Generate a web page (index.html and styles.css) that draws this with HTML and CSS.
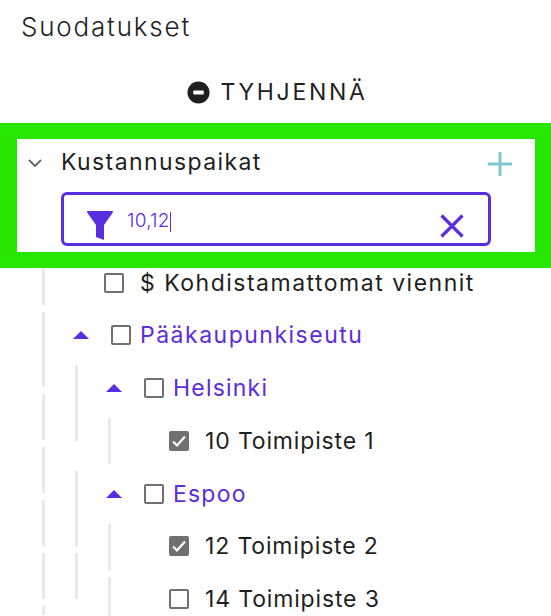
FILE: index.html
```html
<!DOCTYPE html>
<html lang="en">
<head>
    <meta charset="UTF-8">
    <meta name="viewport" content="width=device-width, initial-scale=1.0">
    <title>Suodatukset</title>
    <link rel="stylesheet" href="styles.css">
</head>
<body>
    <h1 class="title">Suodatukset</h1>

    <button class="clear-btn">
        <svg class="clear-icon" viewBox="0 0 24 24"><circle cx="12" cy="12" r="11.5" fill="#1f1f1f"/><rect x="6.5" y="10" width="11" height="4" rx="1" fill="#fff"/></svg>
        <span>TYHJENNÄ</span>
    </button>

    <section class="filter-box">
        <div class="filter-head">
            <svg class="chevron" viewBox="0 0 14 8"><path d="M1 1l6 6 6-6" fill="none" stroke="#666" stroke-width="1.8"/></svg>
            <span class="filter-name">Kustannuspaikat</span>
            <svg class="plus" viewBox="0 0 24 24"><path d="M12 0v24M0 12h24" fill="none" stroke="#7cc9cf" stroke-width="3"/></svg>
        </div>
        <div class="filter-input">
            <svg class="funnel" viewBox="0 0 26 29"><path d="M1 0h24c1 0 1.300 1 .7 1.700L17 14v15l-8-3V14L.3 1.700C-.3 1 0 0 1 0z" fill="#5b2de0"/></svg>
            <span class="filter-value">10,12</span><span class="caret"></span>
            <svg class="clear-x" viewBox="0 0 24 24"><path d="M1.500 1.500l21 21M22.500 1.500l-21 21" fill="none" stroke="#5b2de0" stroke-width="3.200"/></svg>
        </div>
    </section>

    <div class="tree">
        <div class="guide guide-1">
            <span class="dash dash-first"></span>
            <span class="dash dash-long"></span>
            <span class="dash"></span>
            <span class="dash"></span>
            <span class="dash"></span>
            <span class="dash"></span>
            <span class="dash dash-end"></span>
        </div>
        <div class="guide guide-2">
            <span class="dash dash-tall"></span>
            <span class="dash dash-tall"></span>
            <span class="dash"></span>
        </div>
        <div class="guide guide-3">
            <span class="dash"></span>
            <span class="dash"></span>
            <span class="dash dash-end-3"></span>
        </div>

        <div class="row row-top">
            <span class="check"></span>
            <span class="label">$ Kohdistamattomat viennit</span>
        </div>
        <div class="row row-group-1">
            <span class="arrow"></span>
            <span class="check"></span>
            <span class="label label-group">Pääkaupunkiseutu</span>
        </div>
        <div class="row row-group-2">
            <span class="arrow"></span>
            <span class="check"></span>
            <span class="label label-group">Helsinki</span>
        </div>
        <div class="row row-leaf">
            <span class="check checked">
                <svg viewBox="0 0 20 20"><path d="M4 10.500l4 4 8-9" fill="none" stroke="#fff" stroke-width="2.200"/></svg>
            </span>
            <span class="label">10 Toimipiste 1</span>
        </div>
        <div class="row row-group-2">
            <span class="arrow"></span>
            <span class="check"></span>
            <span class="label label-group">Espoo</span>
        </div>
        <div class="row row-leaf">
            <span class="check checked">
                <svg viewBox="0 0 20 20"><path d="M4 10.500l4 4 8-9" fill="none" stroke="#fff" stroke-width="2.200"/></svg>
            </span>
            <span class="label">12 Toimipiste 2</span>
        </div>
        <div class="row row-leaf">
            <span class="check"></span>
            <span class="label">14 Toimipiste 3</span>
        </div>
    </div>
</body>
</html>
```

FILE: styles.css
```css
html, body {
    height: 616px;
    overflow: hidden;
}
body {
    margin: 0;
    font-family: Inter, "Liberation Sans", sans-serif;
    color: #1f1f1f;
    background-color: #fff;
}
.title {
    margin: 0;
    padding: 12px 0 0 21px;
    height: 48px;
    box-sizing: border-box;
    font-size: 26px;
    line-height: 30px;
    font-weight: 300;
    letter-spacing: 1.8px;
}
.clear-btn {
    display: flex;
    align-items: center;
    justify-content: center;
    gap: 10px;
    width: 100%;
    height: 75px;
    padding: 13px 0 0 4px;
    border: none;
    background: none;
    font-family: inherit;
    font-size: 23px;
    letter-spacing: 2.7px;
    color: #1f1f1f;
}
.clear-icon {
    width: 23px;
    height: 23px;
}
.filter-box {
    box-sizing: border-box;
    height: 145px;
    border: solid #27e600;
    border-width: 16px 16px 16px 17px;
    position: relative;
    z-index: 1;
    background-color: #fff;
}
.filter-head {
    display: flex;
    align-items: center;
    height: 46px;
    padding: 0 23px 0 11px;
}
.chevron {
    width: 14px;
    height: 8px;
    margin: 1px 19px 0 0;
}
.filter-name {
    flex: 1;
    font-size: 23px;
    letter-spacing: 1.4px;
}
.plus {
    width: 24px;
    height: 24px;
    margin-top: 4px;
}
.filter-input {
    display: flex;
    align-items: center;
    box-sizing: border-box;
    width: 430px;
    height: 54px;
    margin: 7px 0 0 44px;
    padding: 0 24px 0 23px;
    border: 3px solid #5b2de0;
    border-radius: 6px;
    color: #5b2de0;
}
.funnel {
    width: 26px;
    height: 29px;
    margin: 13px 14px 0 0;
    flex-shrink: 0;
}
.filter-value {
    font-size: 19px;
    font-weight: 300;
    letter-spacing: 0.2px;
    margin-top: 2px;
}
.caret {
    width: 1px;
    height: 20px;
    margin-top: 6px;
    background-color: #5b2de0;
}
.clear-x {
    width: 24px;
    height: 24px;
    margin: 14px 0 0 auto;
}
.tree {
    position: relative;
    display: flex;
    flex-direction: column;
    gap: 22.75px;
    margin-top: -0.4px;
}
.guide {
    position: absolute;
    display: flex;
    flex-direction: column;
    width: 3px;
}
.guide-1 {
    left: 42px;
    top: 0;
}
.guide-2 {
    left: 75px;
    top: 97px;
}
.guide-3 {
    left: 108px;
    top: 150px;
}
.dash {
    flex-shrink: 0;
    height: 46px;
    margin-bottom: 7px;
    background-color: #e9e9f1;
}
.dash-first {
    height: 37px;
}
.dash-long {
    height: 75px;
}
.dash-end {
    height: 9px;
    margin-bottom: 0;
}
.dash-tall {
    height: 76px;
    margin-bottom: 30px;
}
.dash-tall + .dash-tall {
    margin-bottom: 6px;
}
.guide-2 .dash:last-child {
    margin-bottom: 0;
}
.guide-3 .dash:first-child {
    margin-bottom: 60px;
}
.dash-end-3 {
    height: 39px;
    margin-bottom: 0;
}
.row {
    display: flex;
    align-items: center;
    height: 30px;
    font-size: 23px;
    letter-spacing: 1.5px;
    white-space: nowrap;
}
.row-top {
    padding-left: 104px;
}
.row-group-1 {
    padding-left: 73px;
}
.row-group-2 {
    padding-left: 106px;
}
.row-leaf {
    padding-left: 169px;
    letter-spacing: 0.85px;
}
.arrow {
    width: 0;
    height: 0;
    border-left: 8px solid transparent;
    border-right: 8px solid transparent;
    border-bottom: 8px solid #5b2de0;
    margin-right: 22px;
}
.check {
    box-sizing: border-box;
    width: 20px;
    height: 20px;
    border: 2px solid #707070;
    border-radius: 2px;
    margin-right: 16px;
    flex-shrink: 0;
}
.check svg {
    display: block;
    width: 20px;
    height: 20px;
    margin: -2px;
}
.checked {
    background-color: #707070;
}
.row-group-1 .check, .row-group-2 .check {
    margin-right: 9px;
}
.label-group {
    color: #5b2de0;
}
.row-group-2 .label-group {
    letter-spacing: 1.2px;
}
```
